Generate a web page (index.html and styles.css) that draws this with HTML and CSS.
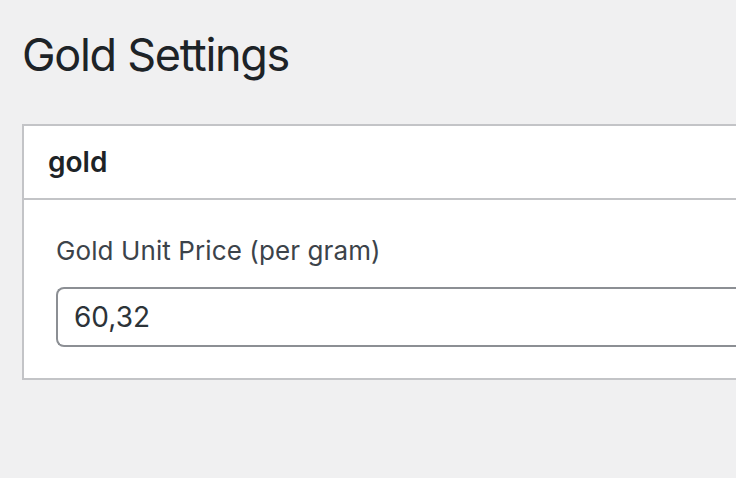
FILE: index.html
```html
<!DOCTYPE html>
<html lang="en">
<head>
<meta charset="utf-8">
<title>Gold Settings</title>
<link rel="stylesheet" href="styles.css">
</head>
<body>
<div class="wrap">
  <h1 class="page-title">Gold Settings</h1>
  <div class="postbox">
    <div class="postbox-header">
      <h2 class="postbox-title">gold</h2>
    </div>
    <div class="postbox-body">
      <label class="field-label" for="gold-price">Gold Unit Price (per gram)</label>
      <input class="field-input" id="gold-price" type="text" value="60,32">
    </div>
  </div>
</div>
</body>
</html>
```

FILE: styles.css
```css
html, body {
  margin: 0;
  padding: 0;
}
body {
  background: #f0f0f1;
  color: #1d2327;
  font-family: Inter, "Liberation Sans", sans-serif;
}
.wrap {
  padding: 0 0 0 22px;
}
.page-title {
  margin: 25px 0 39px;
  font-size: 45px;
  line-height: 60px;
  letter-spacing: -1.3px;
  font-weight: 400;
  color: #1d2327;
}
.postbox {
  background: #fff;
  border: 2px solid #c3c4c7;
  border-right: 0;
}
.postbox-header {
  border-bottom: 2px solid #c3c4c7;
  padding: 16px 24px;
}
.postbox-title {
  margin: 0;
  font-size: 28px;
  line-height: 40px;
  font-weight: 600;
  color: #1d2327;
}
.postbox-body {
  padding: 33px 0 31px 32px;
  display: flex;
  flex-direction: column;
}
.field-label {
  font-size: 26px;
  line-height: 36px;
  letter-spacing: 0.1px;
  color: #3c434a;
  margin-bottom: 18px;
}
.field-input {
  box-sizing: border-box;
  height: 60px;
  width: 100%;
  margin: 0;
  padding: 0 16px;
  border: 2px solid #8c8f94;
  border-right: 0;
  border-radius: 8px 0 0 8px;
  background: #fff;
  font-family: Inter, "Liberation Sans", sans-serif;
  font-size: 28px;
  color: #2c3338;
  outline: none;
}
```
